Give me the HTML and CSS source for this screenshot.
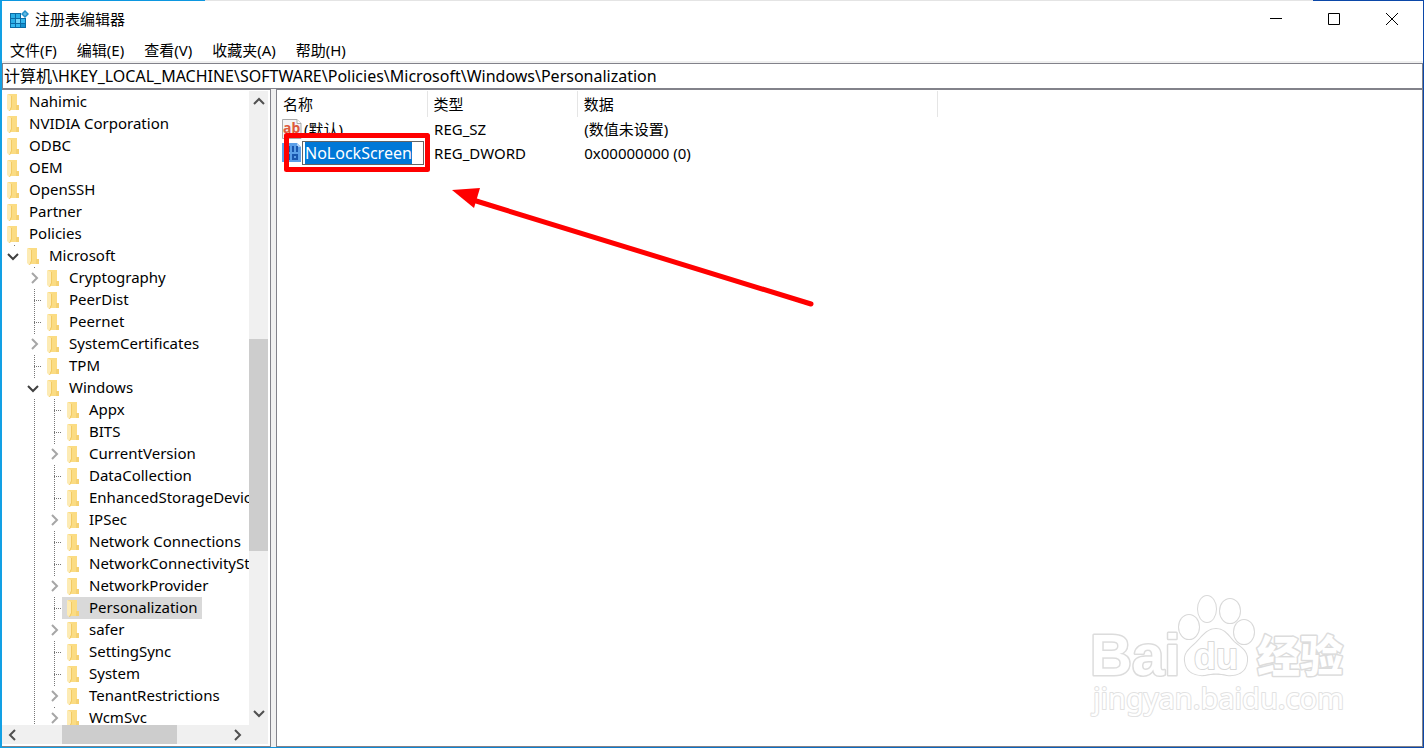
FILE: index.html
```html
<!DOCTYPE html>
<html lang="zh-CN">
<head>
<meta charset="utf-8">
<title>注册表编辑器</title>
<link rel="stylesheet" href="styles.css">
</head>
<body>
<svg class="defs" aria-hidden="true">
  <symbol id="folder" viewBox="0 0 20 22">
    <path d="M4 3h9v11h2v5H6z" fill="#fbdc83"/>
    <path d="M12 14h3v5h-3z" fill="#f5d173"/>
    <path d="M3 3l4 2v11l-2 4-2-2z" fill="#fdebb4"/>
    <path d="M7.500 5v11l-2 4" fill="none" stroke="#f3ca62"/>
  </symbol>
  <symbol id="closed" viewBox="0 0 20 22"><path d="M10 6l5 5-5 5" fill="none" stroke="#a6a6a6" stroke-width="2"/></symbol>
  <symbol id="open" viewBox="0 0 20 22"><path d="M6 9l5 5 5-5" fill="none" stroke="#404040" stroke-width="2"/></symbol>
  <symbol id="up" viewBox="0 0 20 20"><path d="M5 13l5-5 5 5" fill="none" stroke="#505050" stroke-width="2"/></symbol>
  <symbol id="down" viewBox="0 0 20 20"><path d="M5 5l5 5 5-5" fill="none" stroke="#505050" stroke-width="2"/></symbol>
  <symbol id="left" viewBox="0 0 20 20"><path d="M13 5l-5 5 5 5" fill="none" stroke="#505050" stroke-width="2"/></symbol>
  <symbol id="right" viewBox="0 0 20 20"><path d="M5 5l5 5-5 5" fill="none" stroke="#505050" stroke-width="2"/></symbol>
</svg>
<div class="window">
  <header class="titlebar">
    <svg class="app-icon" viewBox="0 0 20 20" aria-hidden="true">
      <path d="M1 4h11v5h5v10H1z" fill="#0a6ba5"/>
      <path d="M2 5h4v4H2zM7 5h4v4H7zM2 10h4v4H2z" fill="#2aaee6"/>
      <path d="M7 10h4v4H7z" fill="#6fd2f7"/>
      <path d="M12 10h4v4h-4zM2 15h4v3H2zM7 15h4v3H7z" fill="#35b8ee"/>
      <path d="M12 15h4v3h-4z" fill="#1490cf"/>
      <path d="M16 1l4 4-4 4-4-4z" fill="#2390cb"/><path d="M16 3l2 2-2 2-2-2z" fill="#63b9e2"/>
    </svg>
    <h1 class="title">注册表编辑器</h1>
    <button class="caption" aria-label="最小化"><svg viewBox="0 0 12 12"><path d="M0 5.500h12" stroke="#000"/></svg></button>
    <button class="caption" aria-label="最大化"><svg viewBox="0 0 12 12"><path d="M.5.5h11v11H.5z" fill="none" stroke="#000"/></svg></button>
    <button class="caption" aria-label="关闭"><svg viewBox="0 0 12 12"><path d="M0 0l12 12M12 0L0 12" stroke="#000"/></svg></button>
  </header>
  <nav class="menubar">
    <button>文件(F)</button><button>编辑(E)</button><button>查看(V)</button><button>收藏夹(A)</button><button>帮助(H)</button>
  </nav>
  <input class="address" aria-label="地址" value="计算机\HKEY_LOCAL_MACHINE\SOFTWARE\Policies\Microsoft\Windows\Personalization">
  <main class="panes">
    <section class="tree-pane">
      <ul class="tree" role="tree">
        <li><span class="item"><svg><use href="#folder"/></svg>Nahimic</span></li>
        <li><span class="item"><svg><use href="#folder"/></svg>NVIDIA Corporation</span></li>
        <li><span class="item"><svg><use href="#folder"/></svg>ODBC</span></li>
        <li><span class="item"><svg><use href="#folder"/></svg>OEM</span></li>
        <li><span class="item"><svg><use href="#folder"/></svg>OpenSSH</span></li>
        <li><span class="item"><svg><use href="#folder"/></svg>Partner</span></li>
        <li><span class="item"><svg><use href="#folder"/></svg>Policies</span></li>
        <li><button class="toggle" aria-label="折叠"><svg><use href="#open"/></svg></button><span class="item"><svg><use href="#folder"/></svg>Microsoft</span></li>
        <li><i></i><button class="toggle" aria-label="展开"><svg><use href="#closed"/></svg></button><span class="item"><svg><use href="#folder"/></svg>Cryptography</span></li>
        <li><i></i><i class="line branch"></i><span class="item"><svg><use href="#folder"/></svg>PeerDist</span></li>
        <li><i></i><i class="line branch"></i><span class="item"><svg><use href="#folder"/></svg>Peernet</span></li>
        <li><i></i><button class="toggle" aria-label="展开"><svg><use href="#closed"/></svg></button><span class="item"><svg><use href="#folder"/></svg>SystemCertificates</span></li>
        <li><i></i><i class="line branch"></i><span class="item"><svg><use href="#folder"/></svg>TPM</span></li>
        <li><i></i><button class="toggle" aria-label="折叠"><svg><use href="#open"/></svg></button><span class="item"><svg><use href="#folder"/></svg>Windows</span></li>
        <li><i></i><i class="line"></i><i class="line branch"></i><span class="item"><svg><use href="#folder"/></svg>Appx</span></li>
        <li><i></i><i class="line"></i><i class="line branch"></i><span class="item"><svg><use href="#folder"/></svg>BITS</span></li>
        <li><i></i><i class="line"></i><button class="toggle" aria-label="展开"><svg><use href="#closed"/></svg></button><span class="item"><svg><use href="#folder"/></svg>CurrentVersion</span></li>
        <li><i></i><i class="line"></i><i class="line branch"></i><span class="item"><svg><use href="#folder"/></svg>DataCollection</span></li>
        <li><i></i><i class="line"></i><i class="line branch"></i><span class="item"><svg><use href="#folder"/></svg>EnhancedStorageDevices</span></li>
        <li><i></i><i class="line"></i><button class="toggle" aria-label="展开"><svg><use href="#closed"/></svg></button><span class="item"><svg><use href="#folder"/></svg>IPSec</span></li>
        <li><i></i><i class="line"></i><i class="line branch"></i><span class="item"><svg><use href="#folder"/></svg>Network Connections</span></li>
        <li><i></i><i class="line"></i><i class="line branch"></i><span class="item"><svg><use href="#folder"/></svg>NetworkConnectivityStatusIndicator</span></li>
        <li><i></i><i class="line"></i><button class="toggle" aria-label="展开"><svg><use href="#closed"/></svg></button><span class="item"><svg><use href="#folder"/></svg>NetworkProvider</span></li>
        <li><i></i><i class="line"></i><i class="line branch"></i><span class="item selected"><svg><use href="#folder"/></svg>Personalization</span></li>
        <li><i></i><i class="line"></i><button class="toggle" aria-label="展开"><svg><use href="#closed"/></svg></button><span class="item"><svg><use href="#folder"/></svg>safer</span></li>
        <li><i></i><i class="line"></i><i class="line branch"></i><span class="item"><svg><use href="#folder"/></svg>SettingSync</span></li>
        <li><i></i><i class="line"></i><i class="line branch"></i><span class="item"><svg><use href="#folder"/></svg>System</span></li>
        <li><i></i><i class="line"></i><button class="toggle" aria-label="展开"><svg><use href="#closed"/></svg></button><span class="item"><svg><use href="#folder"/></svg>TenantRestrictions</span></li>
        <li><i></i><i class="line"></i><button class="toggle" aria-label="展开"><svg><use href="#closed"/></svg></button><span class="item"><svg><use href="#folder"/></svg>WcmSvc</span></li>
      </ul>
      <div class="scroll vertical">
        <button aria-label="向上滚动"><svg><use href="#up"/></svg></button>
        <div class="track"><div class="before"></div><div class="thumb"></div><div class="after"></div></div>
        <button aria-label="向下滚动"><svg><use href="#down"/></svg></button>
      </div>
      <div class="scroll horizontal">
        <button aria-label="向左滚动"><svg><use href="#left"/></svg></button>
        <div class="track"><div class="before"></div><div class="thumb"></div><div class="after"></div></div>
        <button aria-label="向右滚动"><svg><use href="#right"/></svg></button>
      </div>
    </section>
    <section class="list-pane">
      <table class="values">
        <colgroup><col class="narrow"><col class="narrow"><col class="wide"></colgroup>
        <thead><tr><th>名称</th><th>类型</th><th>数据</th></tr></thead>
        <tbody>
          <tr>
            <td><div class="name">
              <svg class="value-icon" viewBox="0 0 20 20" aria-hidden="true"><path d="M.5.5H15l4 4v15H.5z" fill="#f4f4f4" stroke="#aaa"/><path d="M15 .5v4h4" fill="#fff" stroke="#aaa"/><text class="glyph-ab" x="1" y="14">ab</text></svg>
              <span>(默认)</span></div></td>
            <td>REG_SZ</td><td>(数值未设置)</td>
          </tr>
          <tr>
            <td><div class="name editing">
              <svg class="value-icon" viewBox="0 0 20 20" aria-hidden="true"><path d="M0 0h15l4 4v15H0z" fill="#5b9fe8"/><path d="M15 0v4h4" fill="#a9cdf4"/><g fill="none" stroke="#1a56ae" stroke-width="2"><rect x="4" y="4" width="3" height="4"/><path d="M11 3v6M15 3v6M7 11v6"/><rect x="11" y="12" width="4" height="4"/></g></svg>
              <input class="rename" aria-label="数值名称" value="NoLockScreen"></div></td>
            <td>REG_DWORD</td><td>0x00000000 (0)</td>
          </tr>
        </tbody>
      </table>
    </section>
  </main>
</div>
<svg class="annotation" viewBox="0 0 530 172" aria-hidden="true">
  <path d="M3.500 3.500h141v34H3.500z" fill="none" stroke="#f00" stroke-width="5" stroke-linejoin="round"/>
  <path d="M190 68L528 172" stroke="#f00" stroke-width="5" stroke-linecap="round"/>
  <path d="M169 58l28-2-6 20z" fill="#f00"/>
</svg>
<svg class="watermark" viewBox="0 0 290 140" aria-hidden="true">
  <g class="outline">
    <text class="brand" x="10" y="95">Bai</text>
    <text class="cjk" x="177" y="92">经验</text>
    <text class="site" x="13" y="129">jingyan.baidu.com</text>
    <g class="paw">
      <ellipse cx="109" cy="47" rx="10" ry="12"/>
      <ellipse cx="127" cy="29" rx="9" ry="13"/>
      <ellipse cx="150" cy="31" rx="10" ry="12"/>
      <ellipse cx="164" cy="52" rx="10" ry="12"/>
      <path d="M136 49c9 0 13 8 18 13 7 6 14 9 13 19-1 12-11 15-20 14-8-2-14-2-22 0-10 1-19-3-20-14-1-9 6-13 12-19 5-5 10-13 19-13z"/>
      <text class="du" x="114" y="89">du</text>
    </g>
  </g>
</svg>
<script src="main.js"></script>
</body>
</html>
```
FILE: styles.css
```css
* { box-sizing: border-box; }
body {
  margin: 0;
  height: 100vh;
  padding: 1px 1px 1px 2px;
  position: relative;
  overflow: hidden;
  background:
    linear-gradient(90deg, #0c97e0 205px, #e4e4e4 205px calc(100% - 111px), #0b47a8 calc(100% - 111px)) top / 100% 1px no-repeat,
    linear-gradient(90deg, #12a0e4, #0b47a8) bottom / 100% 1px no-repeat,
    linear-gradient(90deg, #12a0e4 50%, #0b47a8 50%);
  color: #000;
  font: 15px/22px "Noto Sans", "Noto Sans CJK SC", sans-serif;
}
button { margin: 0; padding: 0; border: 0; background: none; color: inherit; font: inherit; }
svg { display: block; }
.defs { display: none; }

.window { height: 100%; display: flex; flex-direction: column; background: #fff; }
.titlebar { display: flex; align-items: center; height: 36px; padding: 0 2px 0 7px; }
.app-icon { width: 20px; height: 20px; }
.title { flex: 1; margin: 0 0 0 6px; font-size: 15px; font-weight: 400; }
.caption { display: flex; align-items: center; justify-content: center; width: 58px; height: 36px; }
.caption svg { width: 12px; height: 12px; }

.menubar { display: flex; gap: 20px; height: 26px; padding: 2px 0 0 8px; border-bottom: 2px solid #f0f0f0; }
.address { width: 100%; height: 26px; padding: 0 1px 2px; border: 1px solid #82828a; outline: 0; background: #fff; font: inherit; font-size: 16px; color: inherit; }

.panes { flex: 1; min-height: 0; display: flex; gap: 5px; background: #f0f0f0; }
.tree-pane {
  flex: none; width: 269px; min-height: 0;
  display: grid; grid-template: minmax(0, 1fr) 19px / minmax(0, 1fr) 19px;
  padding: 1px 2px 2px 0;
  border: solid #82828a; border-width: 1px 1px 1px 0; background: #fff;
}
.tree { margin: 0; padding: 0; list-style: none; overflow: hidden; }
.tree li { display: flex; height: 22px; white-space: nowrap; }
.tree i, .toggle { flex: none; width: 20px; height: 22px; }
.line { background: repeating-linear-gradient(#777 0 1px, transparent 1px 2px) 12px 0 / 1px 100% no-repeat; }
.branch {
  background:
    repeating-linear-gradient(#777 0 1px, transparent 1px 2px) 12px 0 / 1px 100% no-repeat,
    repeating-linear-gradient(90deg, #777 0 1px, transparent 1px 2px) 12px 11px / 8px 1px no-repeat;
}
.toggle { background: linear-gradient(#777, #777) 12px 0 / 1px 1px no-repeat; }
.toggle svg { width: 20px; height: 22px; }
.item { display: flex; padding: 0 4px 0 2px; line-height: 21px; }
.item svg { width: 20px; height: 22px; margin-right: 5px; }
.selected { background: #d9d9d9; }

.scroll { display: flex; background: #f0f0f0; }
.scroll button { flex: none; width: 19px; height: 19px; }
.scroll svg { width: 20px; height: 20px; }
.track { flex: 1; display: flex; }
.vertical, .vertical .track { flex-direction: column; }
.horizontal { grid-column: 1 / -1; padding-right: 19px; }
.thumb { background: #cdcdcd; }
.vertical .before { flex: 229; }
.vertical .thumb { flex: 212; }
.vertical .after { flex: 155; }
.horizontal .before { flex: 41; }
.horizontal .thumb { flex: 115; }
.horizontal .after { flex: 53; }

.list-pane { flex: 1; min-width: 0; padding-top: 1px; border: 1px solid #82828a; background: #fff; }
.values { table-layout: fixed; width: 661px; border-collapse: collapse; }
.narrow { width: 150px; }
.wide { width: 360px; }
.values th { height: 26px; padding: 0 6px; border-right: 1px solid #e5e5e5; font-weight: 400; text-align: left; }
.values td { height: 24px; padding: 0 7px; white-space: nowrap; }
.values td:first-child { padding: 0 3px 0 5px; }
.name { display: flex; align-items: center; height: 24px; }
.value-icon { flex: none; width: 20px; height: 20px; margin-right: 2px; }
.editing .value-icon { margin-right: 0; }
.glyph-ab { font: bold 14px "Noto Sans", sans-serif; fill: #dc5a3c; }
.rename { width: 122px; height: 24px; padding: 0 2px; border: 1px solid #646464; outline: 0; background: #fff; font: inherit; font-size: 16px; color: inherit; }
.rename::selection { background: #0078d7; color: #fff; }

.annotation { position: absolute; left: 283px; top: 132px; width: 530px; height: 172px; overflow: visible; }
.watermark { position: absolute; right: 54px; bottom: 28px; width: 290px; height: 140px; }
.outline { fill: #fff; stroke: #dcdcdc; stroke-width: 3; stroke-linejoin: round; paint-order: stroke; }
.paw { stroke: #d8d8d8; stroke-width: 2; }
.brand { font: bold 58px "Liberation Sans", sans-serif; }
.du { font: bold 36px "Liberation Sans", sans-serif; }
.cjk { font: 900 43px "Noto Sans CJK SC", sans-serif; }
.site { font: 29px "Noto Sans", sans-serif; stroke: #e2e2e2; stroke-width: 2; }
```
FILE: main.js
```js
const rename = document.querySelector('.rename');
rename.focus();
rename.select();
```
